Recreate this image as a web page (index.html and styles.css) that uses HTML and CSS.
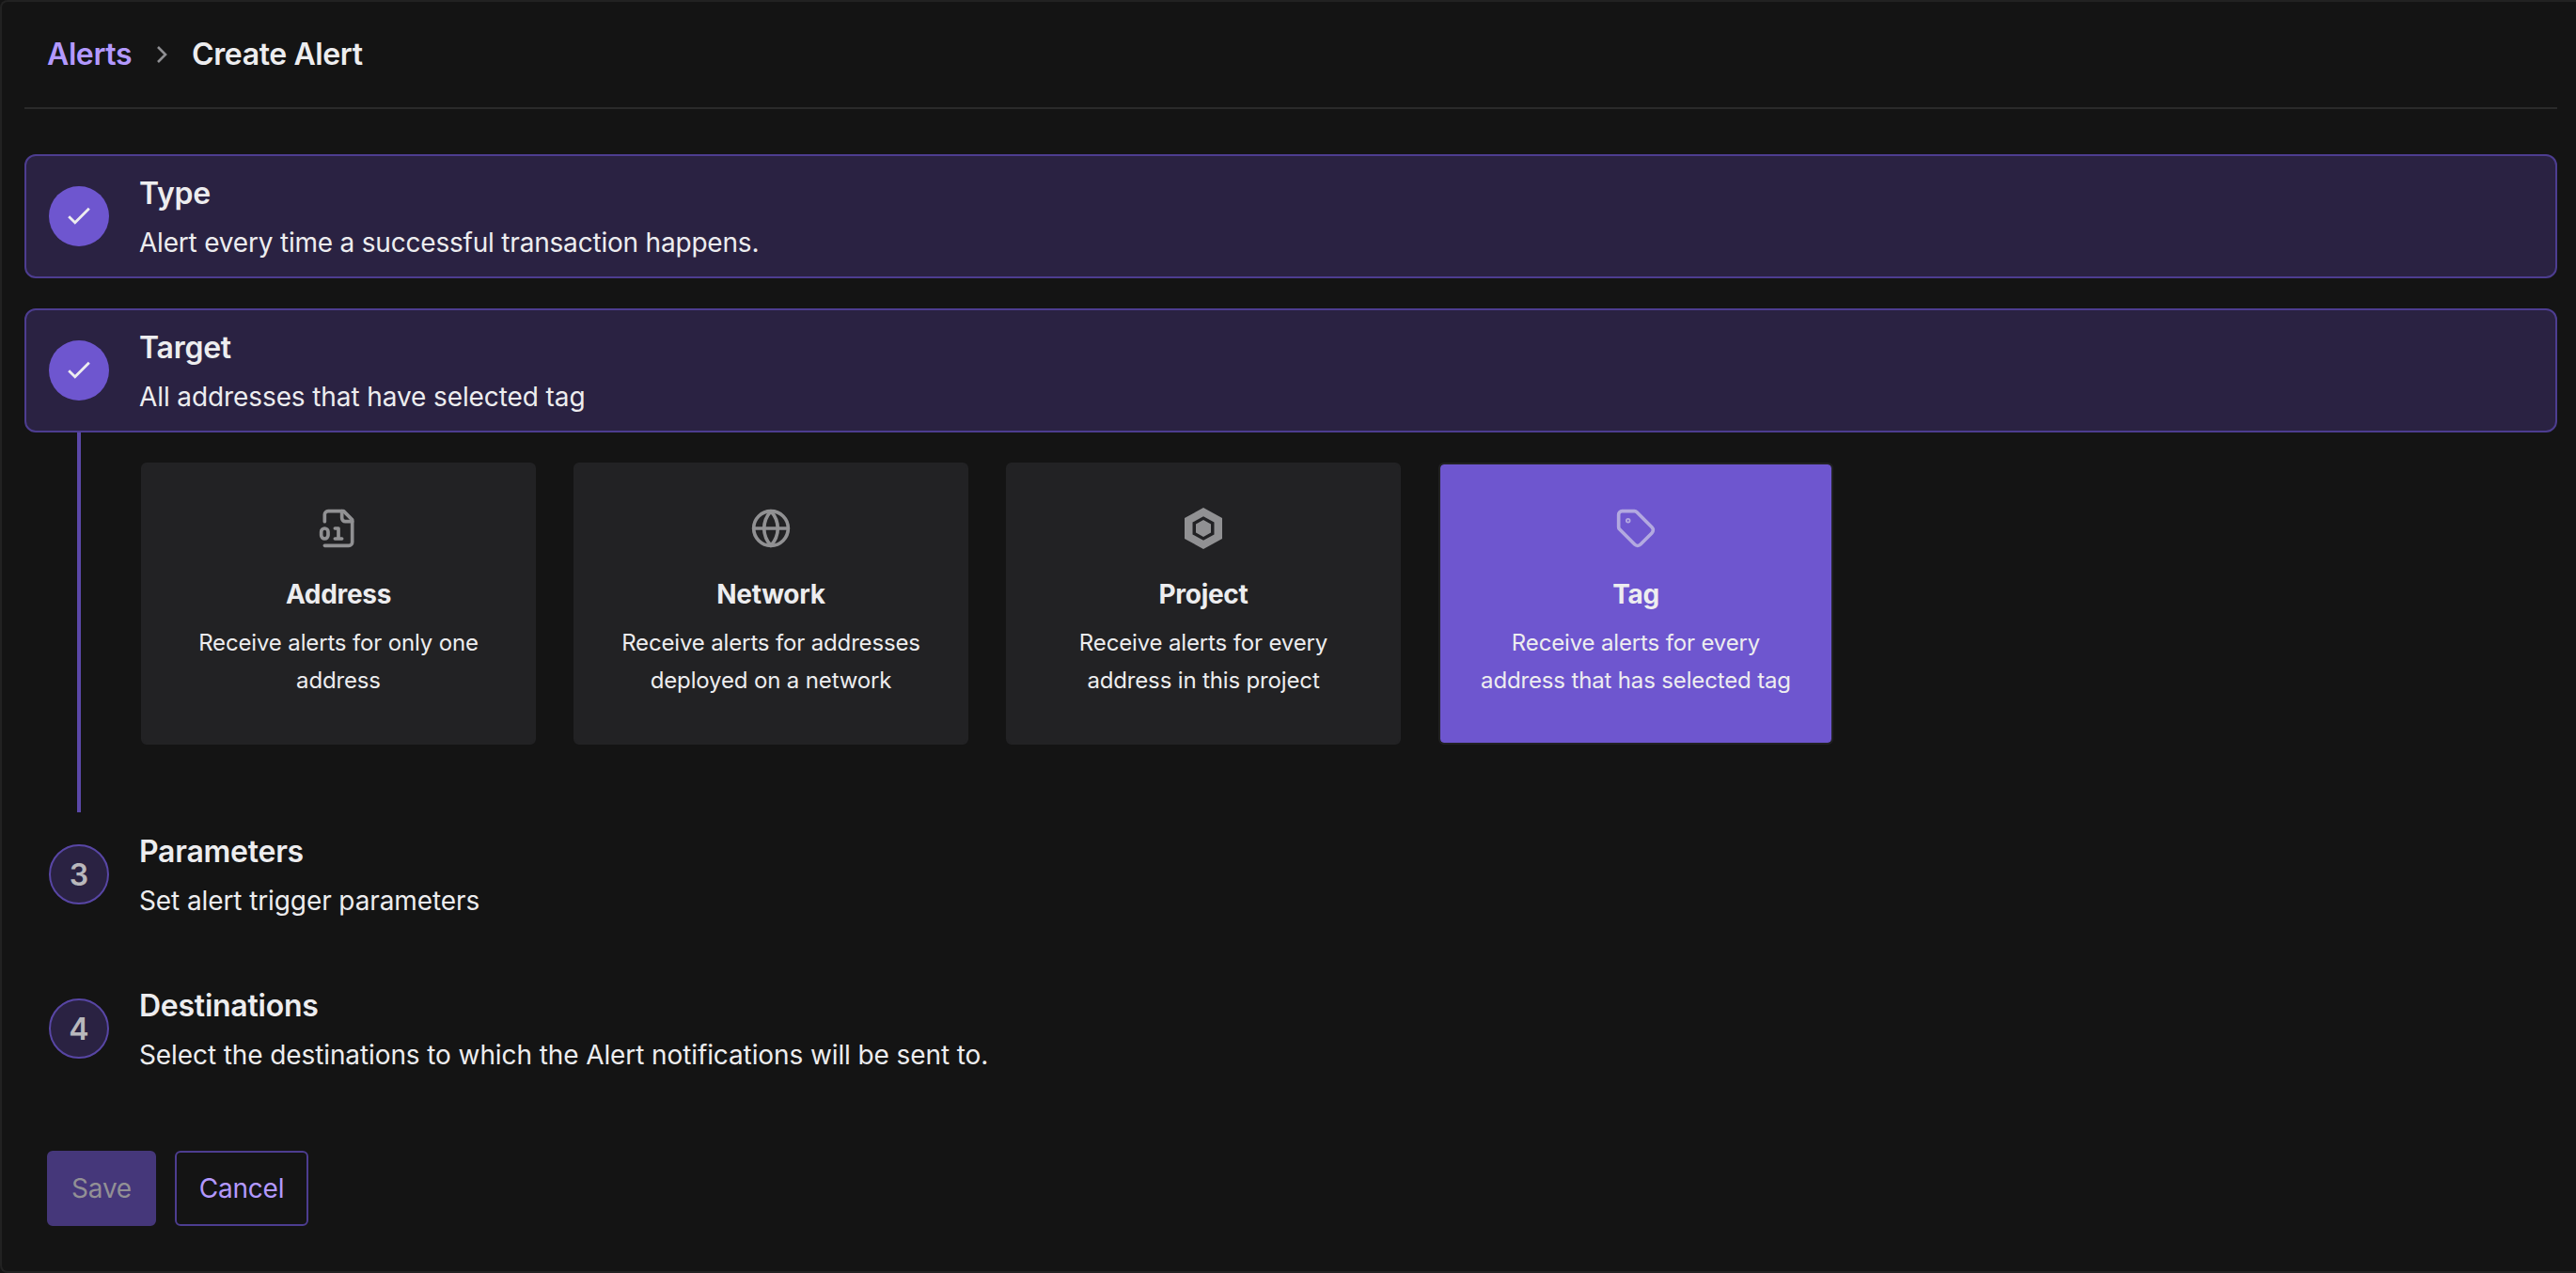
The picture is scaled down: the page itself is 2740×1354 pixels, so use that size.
FILE: index.html
```html
<!DOCTYPE html>
<html lang="en">
<head>
<meta charset="utf-8">
<title>Create Alert</title>
<link rel="stylesheet" href="styles.css">
</head>
<body>
<main class="panel">
  <nav class="breadcrumb">
    <a class="crumb crumb-link">Alerts</a>
    <svg class="chevron" viewBox="0 0 12 20"><path d="M2 2l8 8-8 8"/></svg>
    <span class="crumb">Create Alert</span>
  </nav>

  <section class="steps">
    <div class="step step-done">
      <div class="badge"><svg class="check" viewBox="0 0 26 20"><path d="M2.2 10.200l6.600 6.600L23.800 1.800"/></svg></div>
      <div class="step-text">
        <h2 class="step-title">Type</h2>
        <p class="step-desc step-desc-tight">Alert every time a successful transaction happens.</p>
      </div>
    </div>

    <div class="step step-done">
      <div class="badge"><svg class="check" viewBox="0 0 26 20"><path d="M2.2 10.200l6.600 6.600L23.800 1.800"/></svg></div>
      <div class="step-text">
        <h2 class="step-title">Target</h2>
        <p class="step-desc">All addresses that have selected tag</p>
      </div>
    </div>

    <div class="step-body">
      <div class="connector"></div>
      <div class="cards">
        <div class="card">
          <svg class="icon" viewBox="0 0 24 24"><g class="glyph"><path d="M4 22h14a2 2 0 0 0 2-2V7l-5-5H6a2 2 0 0 0-2 2v4"/><path d="M14 2v4a2 2 0 0 0 2 2h4"/><rect width="4" height="6" x="2" y="12" rx="2"/><path d="M10 12h2v6M10 18h4"/></g></svg>
          <h3 class="card-title">Address</h3>
          <p class="card-desc">Receive alerts for only one address</p>
        </div>
        <div class="card">
          <svg class="icon" viewBox="0 0 24 24"><g class="glyph"><circle cx="12" cy="12" r="10"/><path d="M2 12h20"/><path d="M12 2a15.300 15.300 0 0 1 4 10 15.300 15.300 0 0 1-4 10 15.300 15.300 0 0 1-4-10 15.300 15.300 0 0 1 4-10z"/></g></svg>
          <h3 class="card-title">Network</h3>
          <p class="card-desc">Receive alerts for addresses deployed on a network</p>
        </div>
        <div class="card">
          <svg class="icon" viewBox="0 0 44 44"><path class="glyph-solid" d="M22 0l20 11v22L22 44 2 33V11zM22 9.200L10.500 15.600v12.800L22 34.800l11.500-6.400V15.600zM22 13l8 4.500v9L22 31l-8-4.500v-9z"/></svg>
          <h3 class="card-title">Project</h3>
          <p class="card-desc">Receive alerts for every address in this project</p>
        </div>
        <div class="card card-selected">
          <svg class="icon" viewBox="0 0 24 24"><g class="glyph"><path d="M12.586 2.586A2 2 0 0 0 11.172 2H4a2 2 0 0 0-2 2v7.172a2 2 0 0 0 .586 1.414l8.704 8.704a2.426 2.426 0 0 0 3.420 0l6.580-6.580a2.426 2.426 0 0 0 0-3.420z"/><circle cx="7.500" cy="7.500" r=".5"/></g></svg>
          <h3 class="card-title">Tag</h3>
          <p class="card-desc">Receive alerts for every address that has selected tag</p>
        </div>
      </div>
    </div>

    <div class="step">
      <div class="badge badge-number">3</div>
      <div class="step-text">
        <h2 class="step-title">Parameters</h2>
        <p class="step-desc">Set alert trigger parameters</p>
      </div>
    </div>

    <div class="step">
      <div class="badge badge-number">4</div>
      <div class="step-text">
        <h2 class="step-title">Destinations</h2>
        <p class="step-desc">Select the destinations to which the Alert notifications will be sent to.</p>
      </div>
    </div>
  </section>

  <div class="actions">
    <button class="button button-save" disabled>Save</button>
    <button class="button button-cancel">Cancel</button>
  </div>
</main>
</body>
</html>
```
FILE: styles.css
```css
* {
  box-sizing: border-box;
  margin: 0;
}

body {
  background: #141414;
  color: #ededef;
  font-family: Inter, "Liberation Sans", sans-serif;
}

.panel {
  height: 1354px;
  border: 2px solid #222;
  border-right: 0;
  border-radius: 8px 0 0 8px;
  padding: 0 20px 0 24px;
}

.breadcrumb {
  display: flex;
  align-items: center;
  height: 114px;
  padding: 0 24px;
  border-bottom: 2px solid #2a2a2a;
}

.crumb {
  font-size: 32px;
  font-weight: 600;
  line-height: 40px;
  letter-spacing: -0.4px;
}

.crumb-link {
  color: #b399ff;
}

.chevron {
  width: 12px;
  height: 20px;
  margin: 0 26px;
  fill: none;
  stroke: #8f8f93;
  stroke-width: 2.6;
}

.steps {
  padding-top: 48px;
}

.step {
  display: flex;
  align-items: center;
  gap: 32px;
  height: 132px;
  padding: 0 24px;
  border: 2px solid transparent;
  border-radius: 12px;
}

.step + .step {
  margin-top: 32px;
}

.step-done {
  background: #2a2242;
  border-color: #4d3d90;
}

.badge {
  display: flex;
  align-items: center;
  justify-content: center;
  width: 64px;
  height: 64px;
  border-radius: 50%;
  background: #6e56cf;
}

.badge-number {
  background: #2a2242;
  border: 2px solid #5846a5;
  color: #b9b8bc;
  font-size: 32px;
  font-weight: 600;
}

.check {
  width: 26px;
  height: 20px;
  fill: none;
  stroke: #ededef;
  stroke-width: 2.8;
}

.step-text {
  padding-top: 4px;
}

.step-title {
  font-size: 32px;
  font-weight: 600;
  line-height: 52px;
  letter-spacing: -0.25px;
}

.step-desc {
  font-size: 28px;
  line-height: 52px;
  letter-spacing: -0.1px;
}

.step-desc-tight {
  letter-spacing: -0.2px;
}

.step-body {
  display: flex;
  gap: 64px;
  height: 404px;
  padding-left: 56px;
}

.connector {
  width: 4px;
  background: #5b48a8;
}

.cards {
  display: flex;
  gap: 40px;
  padding-top: 32px;
}

.card {
  display: flex;
  flex-direction: column;
  align-items: center;
  width: 420px;
  height: 300px;
  padding: 46px 36px 0;
  border: 2px solid #222224;
  border-radius: 6px;
  background: #222224;
  text-align: center;
}

.card-selected {
  background: #6e56cf;
  background-clip: padding-box;
}

.icon {
  width: 44px;
  height: 44px;
  color: #ededef;
  opacity: 0.55;
}

.glyph {
  fill: none;
  stroke: currentColor;
  stroke-width: 2;
  stroke-linecap: round;
  stroke-linejoin: round;
}

.glyph-solid {
  fill: currentColor;
  fill-rule: evenodd;
}

.card-title {
  margin-top: 26px;
  font-size: 28px;
  font-weight: 700;
  line-height: 44px;
  letter-spacing: -0.3px;
}

.card-desc {
  margin-top: 10px;
  font-size: 24px;
  line-height: 40px;
  letter-spacing: -0.15px;
}

.actions {
  display: flex;
  gap: 20px;
  padding: 64px 24px 0;
}

.button {
  height: 80px;
  border: 2px solid #4d3d90;
  border-radius: 6px;
  font: 400 28px Inter, "Liberation Sans", sans-serif;
  letter-spacing: -0.2px;
}

.button-save {
  width: 116px;
  background: #45377a;
  border-color: #45377a;
  color: #929095;
}

.button-cancel {
  width: 142px;
  background: transparent;
  color: #b399ff;
}
```
